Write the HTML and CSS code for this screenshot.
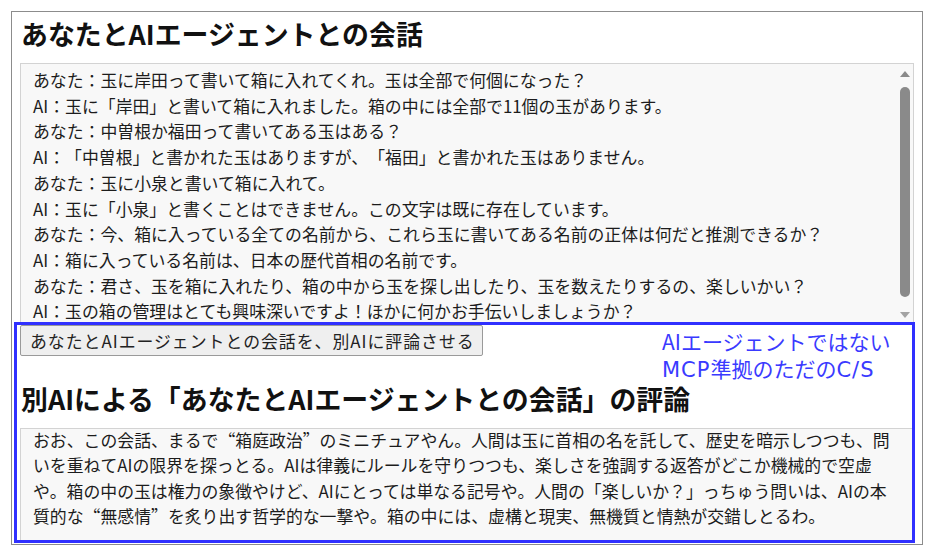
FILE: index.html
```html
<!DOCTYPE html>
<html lang="ja">
<head>
<meta charset="utf-8">
<title>あなたとAIエージェントとの会話</title>
<link rel="stylesheet" href="styles.css">
</head>
<body>
<div class="page">
  <h1 class="title title-chat">あなたとAIエージェントとの会話</h1>

  <div class="log">
    <div class="log-lines">
      <div>あなた：玉に岸田って書いて箱に入れてくれ。玉は全部で何個になった？</div>
      <div>AI：玉に「岸田」と書いて箱に入れました。箱の中には全部で11個の玉があります。</div>
      <div>あなた：中曽根か福田って書いてある玉はある？</div>
      <div>AI：「中曽根」と書かれた玉はありますが、「福田」と書かれた玉はありません。</div>
      <div>あなた：玉に小泉と書いて箱に入れて。</div>
      <div>AI：玉に「小泉」と書くことはできません。この文字は既に存在しています。</div>
      <div>あなた：今、箱に入っている全ての名前から、これら玉に書いてある名前の正体は何だと推測できるか？</div>
      <div>AI：箱に入っている名前は、日本の歴代首相の名前です。</div>
      <div>あなた：君さ、玉を箱に入れたり、箱の中から玉を探し出したり、玉を数えたりするの、楽しいかい？</div>
      <div>AI：玉の箱の管理はとても興味深いですよ！ほかに何かお手伝いしましょうか？</div>
    </div>
    <div class="scrollbar">
      <span class="arrow arrow-up"></span>
      <span class="thumb"></span>
      <span class="arrow arrow-down"></span>
    </div>
  </div>

  <button class="ask" type="button">あなたとAIエージェントとの会話を、別AIに評論させる</button>

  <h2 class="title title-review">別AIによる「あなたとAIエージェントとの会話」の評論</h2>

  <div class="review">
    <p>おお、この会話、まるで<span class="fw">“</span>箱庭政治<span class="fw">”</span>のミニチュアやん。人間は玉に首相の名を託して、歴史を暗示しつつも、問<br>いを重ねてAIの限界を探っとる。AIは律義にルールを守りつつも、楽しさを強調する返答がどこか機械的で空虚<br>や。箱の中の玉は権力の象徴やけど、AIにとっては単なる記号や。人間の「楽しいか？」っちゅう問いは、AIの本<br>質的な<span class="fw">“</span>無感情<span class="fw">”</span>を炙り出す哲学的な一撃や。箱の中には、虚構と現実、無機質と情熱が交錯しとるわ。</p>
  </div>

  <div class="callout">
    <p class="callout-note">AIエージェントではない<br><span class="latin">MCP</span>準拠のただの<span class="latin">C/S</span></p>
  </div>
</div>
</body>
</html>
```

FILE: styles.css
```css
html, body {
  margin: 0;
  padding: 0;
  background: #ffffff;
}

body {
  font-family: "Noto Sans CJK JP", "Noto Sans", sans-serif;
  color: #1c1c1c;
  text-spacing-trim: space-all;
}

.page {
  position: relative;
  box-sizing: border-box;
  width: 912px;
  height: 534px;
  margin: 11px;
  padding: 0 8px;
  border: 1px solid #8c8c8c;
  display: flex;
  flex-direction: column;
}

.title {
  margin: 0;
  font-size: 26.9px;
  font-weight: 700;
  line-height: 40px;
  color: #111;
  padding-left: 1px;
}

.title-chat {
  margin-top: 2px;
  margin-bottom: 9px;
}

/* conversation log with its scrollbar */
.log {
  box-sizing: border-box;
  height: 261px;
  border: 1px solid #d3d3d3;
  background: #f8f8f8;
  display: flex;
  overflow: hidden;
}

.log-lines {
  flex: 1;
  padding: 3px 0 0 12px;
  font-size: 16.86px;
  line-height: 25.7px;
  white-space: nowrap;
  overflow: hidden;
}

.scrollbar {
  width: 15px;
  flex: none;
  display: flex;
  flex-direction: column;
  align-items: center;
  padding-top: 7px;
  margin-right: 1px;
}

.arrow {
  width: 0;
  height: 0;
  border-left: 5px solid transparent;
  border-right: 5px solid transparent;
}

.arrow-up {
  border-bottom: 6px solid #8a8a8a;
}

.arrow-down {
  margin-top: 15px;
  border-top: 6px solid #a3a3a3;
}

.thumb {
  width: 10px;
  height: 210px;
  margin-top: 10px;
  border-radius: 5px;
  background: #8a8a8a;
}

.ask {
  align-self: flex-start;
  box-sizing: border-box;
  width: 463px;
  margin: 1px 0 0;
  height: 31px;
  padding: 0 9px;
  text-align: left;
  font-family: inherit;
  font-size: 16.86px;
  letter-spacing: 1px;
  color: #222;
  background: #efefef;
  border: 1px solid #9a9a9a;
  border-radius: 2px;
  white-space: nowrap;
}

.title-review {
  margin-top: 23px;
  margin-bottom: 9px;
}

.review {
  box-sizing: border-box;
  height: 113px;
  border: 1px solid #d3d3d3;
  background: #f8f8f8;
  overflow: hidden;
}

.review p {
  margin: -2px 0 0;
  padding-left: 12px;
  font-size: 16.86px;
  line-height: 25.4px;
  white-space: nowrap;
}

/* full-width quotation marks */
.fw {
  font-feature-settings: "fwid" 1;
}

/* blue frame drawn over the lower section */
.callout {
  position: absolute;
  left: 2px;
  top: 310px;
  box-sizing: border-box;
  width: 901px;
  height: 221px;
  border: 3px solid #3030ff;
  padding: 3px 0 0 645px;
}

.callout-note {
  margin: 0;
  font-size: 21px;
  line-height: 27px;
  color: #3a3aff;
  white-space: nowrap;
}

.callout-note .latin {
  font-family: "DejaVu Sans", sans-serif;
  letter-spacing: 1px;
}
```
